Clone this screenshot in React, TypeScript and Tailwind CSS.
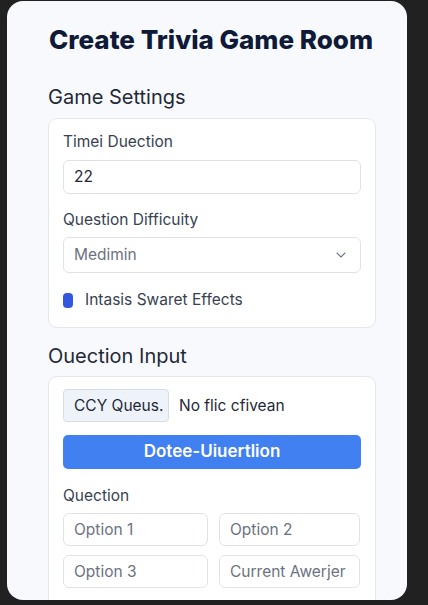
export default function App() {
  return (
    <div className="w-[428px] h-[605px] bg-[#212121] pl-[7px] pt-[1px] font-['Inter',sans-serif]">
      <div className="w-[400px] h-[599px] rounded-[16px] overflow-hidden bg-[#f8f9fc] pl-[41px] pr-[31px] pt-[23px]">
        <h1 className="h-[32px] leading-[32px] text-[26px] font-extrabold text-[#0e1a38] text-center whitespace-nowrap pr-[2px]">
          Create Trivia Game Room
        </h1>

        <h2 className="mt-[27px] h-[28px] leading-[28px] text-[20px] text-[#1f2937]">Game Settings</h2>
        <div className="mt-[7px] rounded-[9px] border border-[#e4e7ec] bg-white px-[14px] pt-[11px] pb-[17px]">
          <label className="block h-[24px] leading-[24px] text-[15.5px] text-[#374151]">Timei Duection</label>
          <div className="mt-[6px] h-[34px] rounded-[6px] border border-[#dfe3e8] bg-white px-[10px] flex items-center text-[15.5px] text-[#1f2937]">
            22
          </div>
          <label className="mt-[14px] block h-[24px] leading-[24px] text-[15.5px] text-[#374151]">Question Difficuity</label>
          <div className="mt-[5px] h-[36px] rounded-[6px] border border-[#dfe3e8] bg-white pl-[10px] pr-[11px] flex items-center justify-between text-[15.5px] text-[#6b7280]">
            <span>Medimin</span>
            <svg width="16" height="16" viewBox="0 0 24 24" fill="none" stroke="#6b7280" strokeWidth="1.6" strokeLinecap="round" strokeLinejoin="round">
              <path d="M6 9l6 6 6-6" />
            </svg>
          </div>
          <div className="mt-[17px] h-[20px] flex items-center gap-[12px]">
            <div className="w-[10px] h-[15px] rounded-[4px] bg-[#3358df]" />
            <span className="text-[15.5px] text-[#374151]">Intasis Swaret Effects</span>
          </div>
        </div>

        <h2 className="mt-[14px] h-[28px] leading-[28px] text-[20px] text-[#1f2937]">Ouection Input</h2>
        <div className="mt-[6px] h-[260px] rounded-[9px] border border-[#e4e7ec] bg-white px-[14px] pt-[12px]">
          <div className="flex items-center gap-[10px]">
            <div className="w-[106px] h-[33px] rounded-[4px] border border-[#d8dde5] bg-[#eef3fa] flex items-center pl-[10px] text-[15.5px] text-[#1f2937] overflow-hidden whitespace-nowrap">
              CCY Queus.
            </div>
            <span className="text-[15.5px] text-[#1f2937]">No flic cfivean</span>
          </div>
          <button className="mt-[13px] w-full h-[34px] rounded-[5px] bg-[#4180f1] text-white text-[17px] font-semibold">
            Dotee-Uiuertlion
          </button>
          <label className="mt-[15px] block h-[24px] leading-[24px] text-[15.5px] text-[#374151]">Quection</label>
          <div className="mt-[5px] grid grid-cols-[145px_141px] gap-x-[11px] gap-y-[9px]">
            {["Option 1", "Option 2", "Option 3", "Current Awerjer"].map((p) => (
              <div key={p} className="h-[33px] rounded-[6px] border border-[#dfe3e8] bg-white px-[10px] flex items-center text-[15.5px] text-[#6b7280] whitespace-nowrap overflow-hidden">
                {p}
              </div>
            ))}
          </div>
        </div>
      </div>
    </div>
  );
}
